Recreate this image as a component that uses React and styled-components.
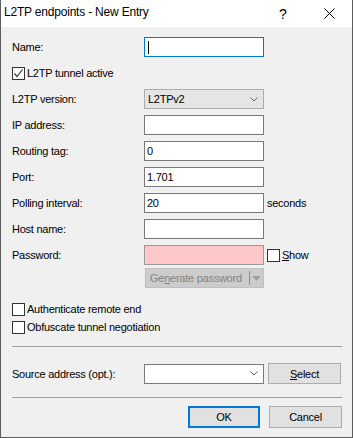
import styled, { createGlobalStyle } from "styled-components";

const GlobalStyle = createGlobalStyle`
    body {
        margin: 0;
        background: #f0f0f0;
        font-family: "Liberation Sans", Arial, sans-serif;
    }
`;

const Frame = styled.div`
    width: 353px;
    height: 438px;
    box-sizing: border-box;
    border: 1px solid #5c5c5c;
    border-top: none;
    background: #f0f0f0;
    display: flex;
    flex-direction: column;
    color: #000;
`;

const TitleBar = styled.div`
    height: 27px;
    background: #fff;
    display: flex;
    align-items: flex-start;
`;

const TitleText = styled.div`
    flex: 1;
    padding-left: 3px;
    font-size: 12px;
    letter-spacing: -0.2px;
    line-height: 24px;
`;

const TitleButton = styled.div`
    width: 46px;
    height: 27px;
    display: flex;
    align-items: center;
    justify-content: center;
    font-size: 14px;
`;

const Body = styled.div`
    display: flex;
    flex-direction: column;
    padding: 10px 10px 0 11px;
`;

const FormGrid = styled.div`
    display: grid;
    grid-template-columns: 132px 120px 1fr;
    grid-auto-rows: 20px;
    row-gap: 6px;
    align-items: center;
`;

const Label = styled.div`
    font-size: 11px;
    letter-spacing: -0.25px;
    white-space: nowrap;
`;

const Field = styled.div`
    height: 20px;
    box-sizing: border-box;
    border: 1px solid ${p => p.$focused ? "#0078d7" : p.$border || "#7a7a7a"};
    background: ${p => p.$bg || "#fff"};
    padding: 0 2px;
    font-size: 11px;
    letter-spacing: -0.25px;
    display: flex;
    align-items: center;
`;

const Caret = styled.span`
    width: 1px;
    height: 13px;
    background: #000;
    margin-left: 1px;
`;

const Combo = styled.div`
    height: 20px;
    box-sizing: border-box;
    border: 1px solid ${p => p.$editable ? "#7a7a7a" : "#adadad"};
    background: ${p => p.$editable ? "#fff" : "#e5e5e5"};
    padding: 0 5px 0 3px;
    font-size: 11px;
    letter-spacing: -0.25px;
    display: flex;
    align-items: center;
    justify-content: space-between;
`;

const CheckRow = styled.div`
    grid-column: ${p => p.$span ? "1 / -1" : "auto"};
    height: 18px;
    display: flex;
    align-items: center;
    gap: 2px;
    margin-left: ${p => p.$indent || 0}px;
    font-size: 11px;
    letter-spacing: -0.25px;
`;

const Box = styled.span`
    width: 13px;
    height: 13px;
    box-sizing: border-box;
    border: 1px solid #333;
    background: #fff;
    display: flex;
    align-items: center;
    justify-content: center;
`;

const Side = styled.div`
    margin-left: 3px;
    font-size: 11px;
    letter-spacing: -0.25px;
`;

const SplitButton = styled.div`
    width: 119px;
    height: 20px;
    box-sizing: border-box;
    margin: 3px 0 0 133px;
    background: #cccccc;
    border: 1px solid #bfbfbf;
    color: #838383;
    font-size: 11px;
    letter-spacing: -0.25px;
    display: flex;
    align-items: center;
`;

const SplitText = styled.span`
    flex: 1;
    padding-left: 4px;
`;

const SplitDivider = styled.span`
    width: 1px;
    height: 14px;
    background: #8d8d8d;
`;

const SplitArrow = styled.span`
    width: 13px;
    display: flex;
    justify-content: center;
`;

const CheckGroup = styled.div`
    margin-top: 12px;
    display: flex;
    flex-direction: column;
`;

const Separator = styled.div`
    height: 1px;
    background: #a0a0a0;
    margin-top: ${p => p.$top}px;
`;

const SourceRow = styled.div`
    margin-top: 16px;
    display: grid;
    grid-template-columns: 132px 120px 77px;
    align-items: center;
`;

const Button = styled.div`
    height: ${p => p.$h || 22}px;
    width: ${p => p.$w || 73}px;
    box-sizing: border-box;
    margin-left: ${p => p.$left || 0}px;
    background: #e1e1e1;
    border: ${p => p.$default ? "2px solid #0078d7" : "1px solid #adadad"};
    font-size: 11px;
    letter-spacing: -0.25px;
    display: flex;
    align-items: center;
    justify-content: center;
`;

const ButtonRow = styled.div`
    margin-top: 8px;
    display: flex;
    justify-content: flex-end;
    gap: 9px;
`;

const Chevron = () => (
    <svg width="8" height="5" viewBox="0 0 8 5">
        <polyline points="0.5,0.5 4,4 7.5,0.5" fill="none" stroke="#606060" strokeWidth="1" />
    </svg>
);

const CheckMark = () => (
    <svg width="11" height="11" viewBox="0 0 11 11">
        <polyline points="1.5,5.5 4,8.5 9.5,1.5" fill="none" stroke="#333" strokeWidth="1.2" />
    </svg>
);

const CheckBox = ({ checked, children, span, indent }) => (
    <CheckRow $span={span} $indent={indent}>
        <Box>{checked && <CheckMark />}</Box>
        <span>{children}</span>
    </CheckRow>
);

export default function App() {
    return (
        <>
            <GlobalStyle />
            <Frame>
                <TitleBar>
                    <TitleText>L2TP endpoints - New Entry</TitleText>
                    <TitleButton>?</TitleButton>
                    <TitleButton>
                        <svg width="11" height="11" viewBox="0 0 11 11">
                            <path d="M0.5 0.5 L10.5 10.5 M10.5 0.5 L0.5 10.5" stroke="#000" strokeWidth="1" />
                        </svg>
                    </TitleButton>
                </TitleBar>
                <Body>
                    <FormGrid>
                        <Label>Name:</Label>
                        <Field $focused><Caret /></Field>
                        <span />

                        <CheckBox checked span>L2TP tunnel active</CheckBox>

                        <Label>L2TP version:</Label>
                        <Combo>L2TPv2<Chevron /></Combo>
                        <span />

                        <Label>IP address:</Label>
                        <Field />
                        <span />

                        <Label>Routing tag:</Label>
                        <Field>0</Field>
                        <span />

                        <Label>Port:</Label>
                        <Field>1.701</Field>
                        <span />

                        <Label>Polling interval:</Label>
                        <Field>20</Field>
                        <Side>seconds</Side>

                        <Label>Host name:</Label>
                        <Field />
                        <span />

                        <Label>Password:</Label>
                        <Field $bg="#ffc8c8" $border="#9a9a9a" />
                        <CheckBox indent={3}><u>S</u>how</CheckBox>
                    </FormGrid>
                    <SplitButton>
                        <SplitText>Ge<u>n</u>erate password</SplitText>
                        <SplitDivider />
                        <SplitArrow>
                            <svg width="9" height="5" viewBox="0 0 9 5">
                                <polygon points="0,0 9,0 4.5,5" fill="#a0a0a0" />
                            </svg>
                        </SplitArrow>
                    </SplitButton>
                    <CheckGroup>
                        <CheckBox>Authenticate remote end</CheckBox>
                        <CheckBox>Obfuscate tunnel negotiation</CheckBox>
                    </CheckGroup>
                    <Separator $top={10} />
                    <SourceRow>
                        <Label>Source address (opt.):</Label>
                        <Combo $editable><span /><Chevron /></Combo>
                        <Button $h={21} $left={4}><span><u>S</u>elect</span></Button>
                    </SourceRow>
                    <Separator $top={13} />
                    <ButtonRow>
                        <Button $default $w={72}>OK</Button>
                        <Button>Cancel</Button>
                    </ButtonRow>
                </Body>
            </Frame>
        </>
    );
}
